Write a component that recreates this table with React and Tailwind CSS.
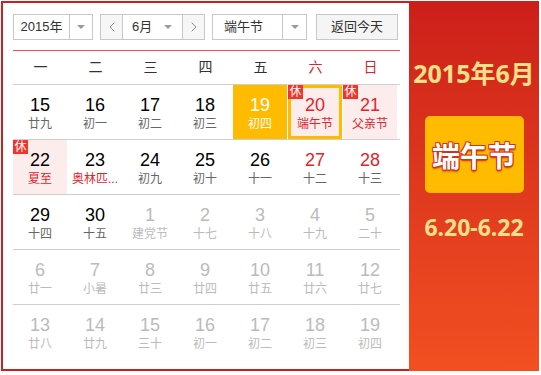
import { ChevronLeft, ChevronRight } from "lucide-react";

const weekdays = ["一", "二", "三", "四", "五", "六", "日"];

// d: day, l: lunar/festival, m: "cur" | "next", flags
const rows = [
  [
    { d: 15, l: "廿九" },
    { d: 16, l: "初一" },
    { d: 17, l: "初二" },
    { d: 18, l: "初三" },
    { d: 19, l: "初四", selected: true },
    { d: 20, l: "端午节", rest: true, today: true, fest: true, red: true },
    { d: 21, l: "父亲节", rest: true, fest: true, red: true },
  ],
  [
    { d: 22, l: "夏至", rest: true, fest: true },
    { d: 23, l: "奥林匹...", fest: true },
    { d: 24, l: "初九" },
    { d: 25, l: "初十" },
    { d: 26, l: "十一" },
    { d: 27, l: "十二", red: true },
    { d: 28, l: "十三", red: true },
  ],
  [
    { d: 29, l: "十四" },
    { d: 30, l: "十五" },
    { d: 1, l: "建党节", next: true },
    { d: 2, l: "十七", next: true },
    { d: 3, l: "十八", next: true },
    { d: 4, l: "十九", next: true },
    { d: 5, l: "二十", next: true },
  ],
  [
    { d: 6, l: "廿一", next: true },
    { d: 7, l: "小暑", next: true },
    { d: 8, l: "廿三", next: true },
    { d: 9, l: "廿四", next: true },
    { d: 10, l: "廿五", next: true },
    { d: 11, l: "廿六", next: true },
    { d: 12, l: "廿七", next: true },
  ],
  [
    { d: 13, l: "廿八", next: true },
    { d: 14, l: "廿九", next: true },
    { d: 15, l: "三十", next: true },
    { d: 16, l: "初一", next: true },
    { d: 17, l: "初二", next: true },
    { d: 18, l: "初三", next: true },
    { d: 19, l: "初四", next: true },
  ],
];

function Caret() {
  return <span className="w-0 h-0 border-x-[4px] border-x-transparent border-t-[4px] border-t-[#9a9a9a]" />;
}

function Cell({ c }) {
  let box = "bg-white";
  if (c.selected) box = "bg-[#ffbb00]";
  else if (c.today) box = "bg-[#fdecec] border-[3px] border-[#ffbb00]";
  else if (c.rest) box = "bg-[#fdecec]";

  let num = "text-black";
  let lun = "text-[#666]";
  if (c.next) {
    num = "text-[#bbb]";
    lun = "text-[#bbb]";
  } else if (c.selected) {
    num = "text-white";
    lun = "text-white";
  } else {
    if (c.red) num = "text-[#e0242b]";
    if (c.fest) lun = "text-[#e0242b]";
  }

  return (
    <div className={`relative w-[54px] h-[54px] flex flex-col items-center ${c.today ? "pt-[7px]" : "pt-[10px]"} ${box}`}>
      {c.rest && (
        <span className={`absolute ${c.today ? "-left-[3px] -top-[3px]" : "left-0 top-0"} w-[15px] h-[14px] bg-[#f5332d] text-white text-[12px] leading-[14px] text-center`}>
          休
        </span>
      )}
      <span className={`text-[18px] leading-[20px] ${num}`}>{c.d}</span>
      <span className={`mt-[2px] text-[12px] leading-[14px] whitespace-nowrap ${lun}`}>{c.l}</span>
    </div>
  );
}

export default function App() {
  return (
    <div className="ml-px mt-px flex w-[538px] h-[370px] font-['Liberation_Sans','Noto_Sans_CJK_SC',sans-serif]">
      {/* Calendar */}
      <div className="w-[408px] h-full bg-white border-2 border-r-0 border-[#cc1f1f] pl-[10px] pr-[9px] pt-[11px]">
        <div className="flex items-center h-[26px] text-[13px] text-[#333]">
          <div className="flex w-[80px] h-[26px] border border-[#c8c8c8] bg-white">
            <div className="w-[55px] flex items-center justify-center">2015年</div>
            <div className="flex-1 flex items-center justify-center border-l border-[#c8c8c8]">
              <Caret />
            </div>
          </div>

          <div className="ml-[7px] flex w-[105px] h-[26px] border border-[#c8c8c8] bg-white">
            <div className="w-[22px] flex items-center justify-center bg-[#f6f6f6] border-r border-[#c8c8c8]">
              <ChevronLeft className="w-[16px] h-[16px] text-[#777]" strokeWidth={1.3} />
            </div>
            <div className="flex-1 flex items-center justify-between pl-[8px] pr-[10px]">
              <span className="ml-[1px]">6月</span>
              <Caret />
            </div>
            <div className="w-[22px] flex items-center justify-center bg-[#f6f6f6] border-l border-[#c8c8c8]">
              <ChevronRight className="w-[16px] h-[16px] text-[#777]" strokeWidth={1.3} />
            </div>
          </div>

          <div className="ml-[7px] flex w-[95px] h-[26px] border border-[#c8c8c8] bg-white">
            <div className="w-[69px] flex items-center pl-[11px]">端午节</div>
            <div className="flex-1 flex items-center justify-center border-l border-[#c8c8c8]">
              <Caret />
            </div>
          </div>

          <div className="ml-[9px] w-[82px] h-[26px] border border-[#c8c8c8] bg-[#f5f5f5] flex items-center justify-center">
            返回今天
          </div>
        </div>

        <div className="mt-[10px] h-px bg-[#ee4f47]" />

        <div className="grid grid-cols-[repeat(7,55px)] h-[33px] items-center text-[14px]">
          {weekdays.map((w, i) => (
            <div key={w} className={`text-center ${i >= 5 ? "text-[#e0242b]" : "text-[#333]"}`}>
              {w}
            </div>
          ))}
        </div>

        {rows.map((row, ri) => (
          <div key={ri} className="border-t border-[#cfcfcf] grid grid-cols-[repeat(7,55px)]">
            {row.map((c, ci) => (
              <Cell key={ci} c={c} />
            ))}
          </div>
        ))}
      </div>

      {/* Holiday panel */}
      <div className="w-[130px] h-full bg-gradient-to-b from-[#cc1e1a] to-[#f24f22] flex flex-col items-center pt-[57px]">
        <div className="text-[25px] leading-[30px] font-bold text-[#fbe08a] font-['Noto_Sans','Noto_Sans_CJK_SC',sans-serif] whitespace-nowrap">
          2015年6月
        </div>
        <div className="mt-[28px] w-[99px] h-[77px] rounded-[5px] bg-[#ffbb00] flex items-center justify-center">
          <span className="text-[28px] font-bold text-white font-['Noto_Sans_CJK_SC',sans-serif] [text-shadow:1px_1px_0_#d3321f,-1px_-1px_0_#d3321f,1px_-1px_0_#d3321f,-1px_1px_0_#d3321f,0_2px_2px_#c02a15]">
            端午节
          </span>
        </div>
        <div className="mt-[19px] text-[23px] leading-[30px] font-bold text-[#fbe08a] font-['Noto_Sans',sans-serif]">
          6.20-6.22
        </div>
      </div>
    </div>
  );
}
